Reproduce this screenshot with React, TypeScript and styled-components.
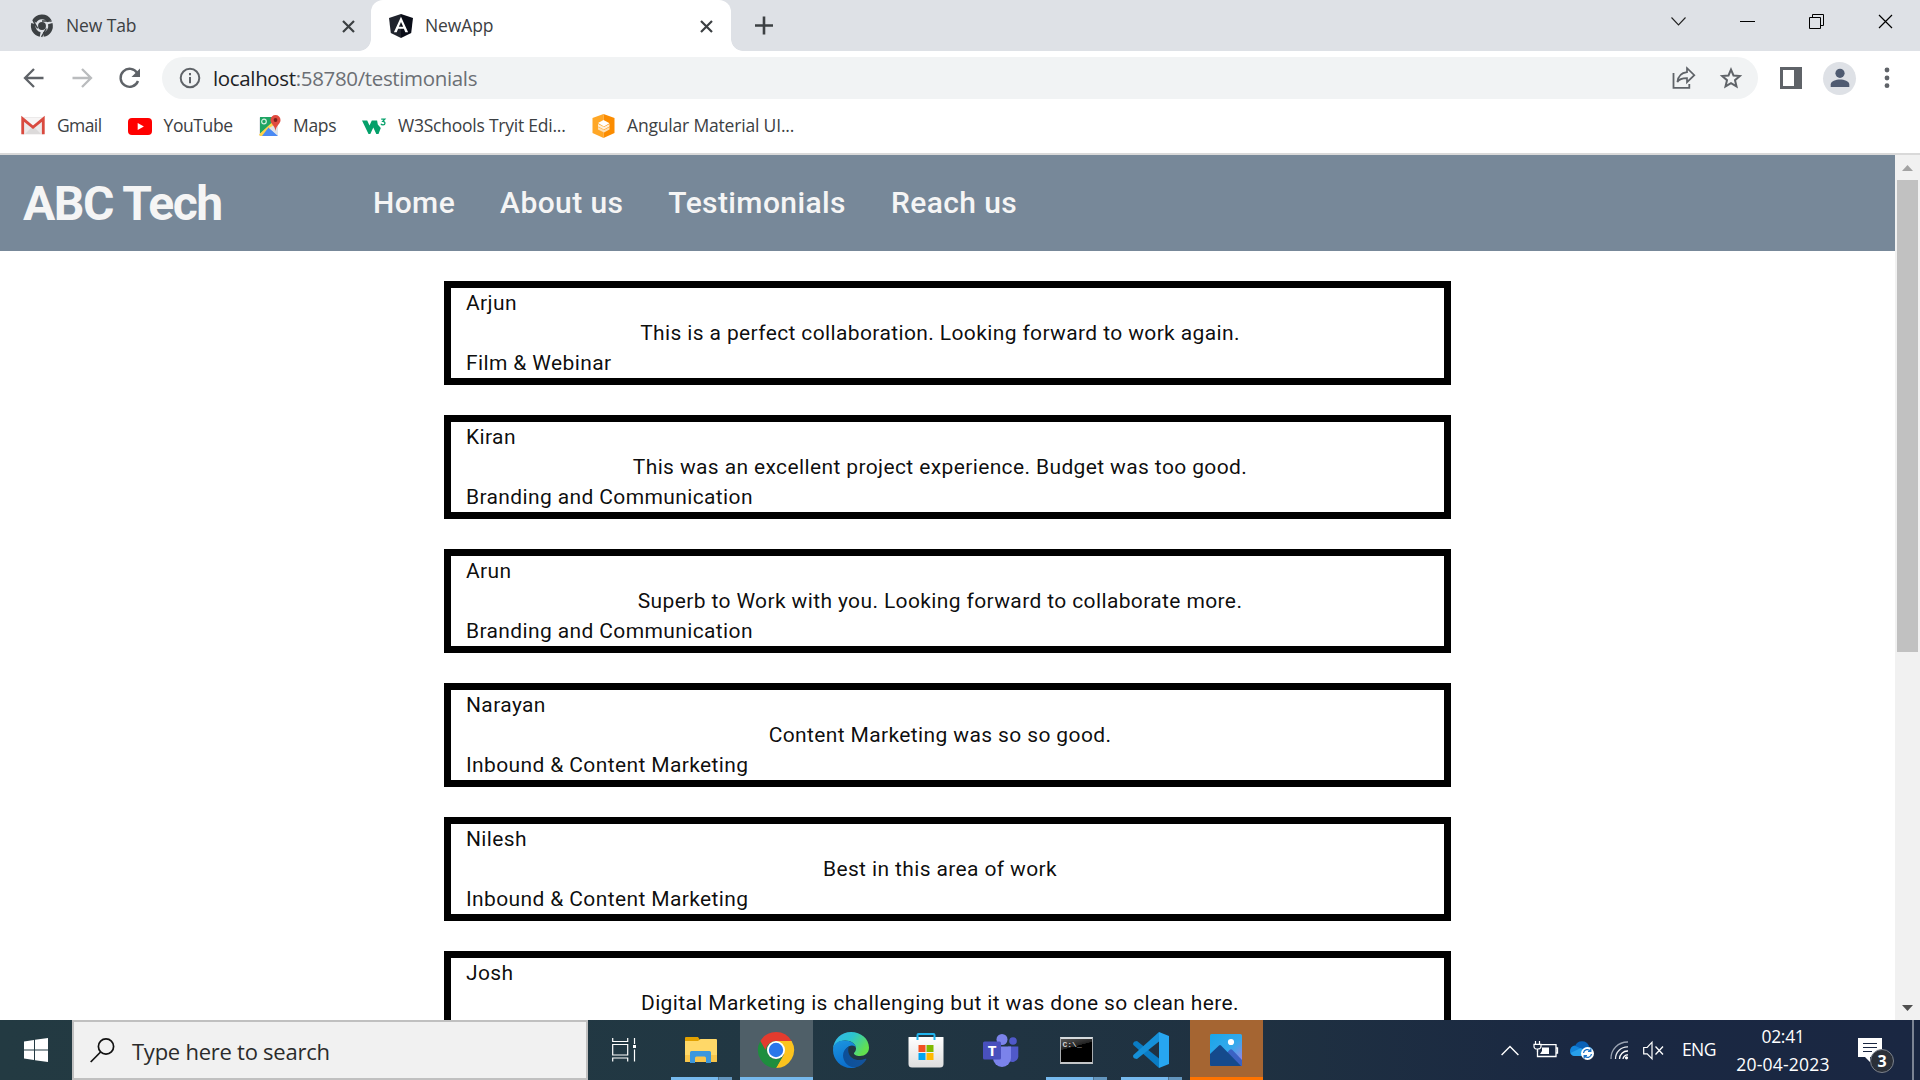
import React from "react";
import styled, { createGlobalStyle } from "styled-components";

const Global = createGlobalStyle`
  *, *::before, *::after { box-sizing: border-box; }
  body { margin: 0; background: #fff; overflow: hidden; }
  svg { display: block; flex: none; overflow: visible; }
`;

const Screen = styled.div`
  width: 1920px;
  height: 1080px;
  display: grid;
  grid-template-rows: 51px 54px 50px 865px 60px;
  overflow: hidden;
  background: #fff;
  font-family: "Open Sans", "Noto Sans", sans-serif;
`;

const Spacer = styled.div<{ $w?: number }>`
  flex: ${(p) => (p.$w === undefined ? "1" : "none")};
  width: ${(p) => (p.$w === undefined ? "auto" : `${p.$w}px`)};
`;

const Label = styled.span<{ $size: number; $track?: number; $color?: string }>`
  font-size: ${(p) => p.$size}px;
  letter-spacing: ${(p) => p.$track ?? 0}px;
  color: ${(p) => p.$color ?? "#3c4043"};
  line-height: 1.36;
  white-space: nowrap;
`;

/* ---------- tab strip ---------- */

const TabStrip = styled.header`
  display: flex;
  background: #dee1e6;
`;

const Tab = styled.div<{ $active?: boolean }>`
  display: flex;
  align-items: center;
  width: ${(p) => (p.$active ? 360 : 371)}px;
  padding: ${(p) => (p.$active ? "1px 18px 0 18px" : "1px 16.5px 0 31px")};
  background: ${(p) => (p.$active ? "#fff" : "transparent")};
  border-radius: 12px 12px 0 0;
`;

const Flare = styled.div<{ $side: "left" | "right" }>`
  align-self: flex-end;
  width: 12px;
  height: 12px;
  margin-left: ${(p) => (p.$side === "left" ? -12 : 0)}px;
  background: radial-gradient(
    circle at ${(p) => (p.$side === "left" ? "0 0" : "100% 0")},
    transparent 11.5px,
    #fff 12.2px
  );
`;

const TabTitle = styled.div<{ $gap: number }>`
  flex: 1;
  padding-left: ${(p) => p.$gap}px;
  display: flex;
`;

const WindowButton = styled.div`
  width: 69px;
  height: 43px;
  display: flex;
  align-items: center;
  justify-content: center;
`;

/* ---------- toolbar ---------- */

const Toolbar = styled.div`
  display: flex;
  align-items: center;
  padding: 0 27px 0 22.5px;
`;

const Omnibox = styled.div`
  width: 1596px;
  height: 42px;
  margin-left: 21px;
  padding: 0 16px 0 16.5px;
  display: flex;
  align-items: center;
  border-radius: 21px;
  background: #f1f3f4;
`;

const Url = styled.div`
  margin-left: 12.5px;
  padding-top: 2px;
  display: flex;
`;

const Avatar = styled.div`
  width: 33px;
  height: 33px;
  margin-left: 21px;
  border-radius: 50%;
  background: #dee1e6;
  display: flex;
  align-items: center;
  justify-content: center;
`;

const Bookmarks = styled.div`
  display: flex;
  padding-left: 21px;
  height: 50px;
  border-bottom: 2px solid #d9d9d9;
`;

const Bookmark = styled.div<{ $w: number; $gap: number }>`
  width: ${(p) => p.$w}px;
  height: 42px;
  display: flex;
  align-items: center;
  gap: ${(p) => p.$gap}px;
`;

/* ---------- web page ---------- */

const Viewport = styled.div`
  display: grid;
  grid-template-columns: 1895px 25px;
  overflow: hidden;
`;

const Page = styled.main`
  overflow: hidden;
  font-family: Roboto, sans-serif;
`;

const Navbar = styled.nav`
  height: 96px;
  display: flex;
  align-items: center;
  padding-left: 23px;
  background: #778899;
  color: #f5f5f5;
`;

const Brand = styled.h1`
  width: 350px;
  margin: 0;
  padding-top: 2px;
  font-size: 48px;
  font-weight: 700;
  letter-spacing: -1.45px;
  line-height: 56px;
  white-space: nowrap;
`;

const NavLinks = styled.div`
  display: flex;
  gap: 45px;
`;

const NavLink = styled.a`
  font-size: 30px;
  font-weight: 500;
  letter-spacing: 0.4px;
  line-height: 48px;
  white-space: nowrap;
`;

const Cards = styled.section`
  display: flex;
  flex-direction: column;
  align-items: center;
  gap: 30px;
  padding-top: 30px;
`;

const Card = styled.article`
  flex: none;
  width: 1007px;
  height: 104px;
  padding: 0 30px 0 15px;
  border: 7px solid #000;
  font-size: 21px;
  line-height: 30px;
  letter-spacing: 0.375px;
  color: rgba(0, 0, 0, 0.95);
`;

const Quote = styled.div`
  text-align: center;
`;

const Scrollbar = styled.div`
  display: flex;
  flex-direction: column;
  align-items: center;
  justify-content: space-between;
  background: #f1f1f1;
`;

const Thumb = styled.div`
  width: 21px;
  height: 472px;
  margin-bottom: auto;
  background: #c1c1c1;
`;

const ScrollArrow = styled.div`
  height: 25px;
  display: flex;
  align-items: center;
`;

/* ---------- taskbar ---------- */

const Taskbar = styled.footer`
  display: flex;
  background: linear-gradient(90deg, #233a42 0%, #213743 40%, #1f3141 65%, #1a2842 82%, #1a2742 100%);
`;

const StartButton = styled.div`
  width: 72px;
  display: flex;
  align-items: center;
  justify-content: center;
`;

const SearchBox = styled.div`
  width: 516px;
  border: 2px solid #c0c0c0;
  background: #f1f1f1;
  display: flex;
  align-items: center;
  padding-left: 16px;
`;

const SearchHint = styled.div`
  display: flex;
  padding: 3px 0 0 17px;
`;

const TaskButton = styled.div<{ $bg?: string; $line?: string }>`
  width: 73px;
  margin-right: 2px;
  display: flex;
  align-items: center;
  justify-content: center;
  background: ${(p) => p.$bg ?? "transparent"};
  border-bottom: 3px solid ${(p) => p.$line ?? "transparent"};
  padding: 3px 1px 0 0;
`;

const OpenApp = styled.div`
  width: 73px;
  margin-right: 2px;
  padding: 3px 6px 0;
  display: grid;
  grid-template-rows: 54px 3px;
`;

const OpenAppIcon = styled.div`
  display: flex;
  align-items: center;
  justify-content: center;
  padding-right: 1px;
`;

const Underline = styled.div`
  width: 61px;
  height: 3px;
  background: linear-gradient(90deg, #76b9ed 0 47px, #4f7390 47px 48px, #6395bd 48px);
`;

const Clock = styled.div`
  width: 96px;
  margin-left: 19px;
  display: flex;
  flex-direction: column;
  align-items: center;
  gap: 4px;
  padding-top: 5px;
`;

const Tray = styled.div`
  display: flex;
  align-items: center;
`;

const ShowDesktop = styled.div`
  width: 8px;
  border-left: 2px solid #7b8494;
`;

/* ---------- icons ---------- */

const Cross = ({ s = 13, w = 2.2, c = "#3c4043" }) => (
  <svg width={s} height={s} viewBox={`0 0 ${s} ${s}`}>
    <path d={`M1 1L${s - 1} ${s - 1}M${s - 1} 1L1 ${s - 1}`} stroke={c} strokeWidth={w} />
  </svg>
);

const GreyChrome = () => (
  <svg width="22" height="22" viewBox="0 0 24 24">
    <g fill="none" stroke="#3c4043" strokeWidth="5">
      <path d="M3.500 7.200A9.500 9.500 0 0 1 20 6.500" />
      <path d="M2.700 9.500A9.500 9.500 0 0 0 10 21.300" />
      <path d="M21 9.500A9.500 9.500 0 0 1 13.500 21.400" />
    </g>
    <path d="M12 6.500h10.500M7.200 14.500L2.500 6.500M16.700 14.700L11.500 23.800" stroke="#3c4043" strokeWidth="1.500" />
    <circle cx="12" cy="12" r="4.300" fill="#3c4043" />
  </svg>
);

const AngularIcon = () => (
  <svg width="24" height="24" viewBox="0 0 24 24">
    <path fill="#20242d" d="M12 0L0 4.1l1.8 15L12 24z" />
    <path fill="#0a0d18" d="M12 0l12 4.1-1.8 15L12 24z" />
    <path fill="#fff" fillRule="evenodd" d="M12 2.7L4.9 18.3h2.8l1.4-3.5h5.8l1.4 3.5h2.8zm0 5.4l2.2 4.6H9.8z" />
  </svg>
);

const Back = ({ flip = false }) => (
  <svg width="21" height="20" viewBox="0 0 21 20" transform={flip ? "scale(-1 1)" : undefined}>
    <path d="M20.5 10H2.5M11 1L2 10l9 9" fill="none" stroke={flip ? "#babcbe" : "#5f6368"} strokeWidth="2.3" />
  </svg>
);

const Reload = () => (
  <svg width="22" height="21" viewBox="0 0 22 21">
    <path d="M18.3 5.2A9 9 0 1 0 19 13" fill="none" stroke="#5f6368" strokeWidth="2.4" />
    <path d="M21 .5V9h-8.5z" fill="#5f6368" />
  </svg>
);

const Info = () => (
  <svg width="22" height="22" viewBox="0 0 22 22">
    <circle cx="11" cy="11" r="9.3" fill="none" stroke="#5f6368" strokeWidth="2" />
    <path d="M10 6h2v2.2h-2zM10 10h2v6.2h-2z" fill="#5f6368" />
  </svg>
);

const Share = () => (
  <svg width="24" height="22" viewBox="0 0 24 22">
    <path d="M1.5 6v14.8h15.8V17" fill="none" stroke="#5f6368" strokeWidth="1.8" />
    <path d="M15 1.2l7.3 7-7.3 7v-4c-5 0-8 1-9.6 4C6 9.500 9 5.800 15 5.200z" fill="none" stroke="#5f6368" strokeWidth="1.7" />
  </svg>
);

const Star = () => (
  <svg width="22" height="22" viewBox="0 0 22 22">
    <path d="M11 2.600l2.500 5.900 6.300.5-4.800 4.200 1.500 6.200L11 16.100l-5.500 3.300L7 13.200 2.200 9l6.300-.5z" fill="none" stroke="#5f6368" strokeWidth="2" />
  </svg>
);

const SidePanel = () => (
  <svg width="22" height="22" viewBox="0 0 22 22">
    <path fill="#5f6368" fillRule="evenodd" d="M0 0h22v22H0zM3 3v16h11V3z" />
  </svg>
);

const Person = () => (
  <svg width="20" height="20" viewBox="0 0 20 20">
    <circle cx="10" cy="5.300" r="4.600" fill="#4f5b71" />
    <path d="M.7 19v-2.500C.7 13 6 11.500 10 11.500s9.300 1.500 9.300 5V19z" fill="#4f5b71" />
  </svg>
);

const Dots = () => (
  <svg width="6" height="22" viewBox="0 0 6 22">
    {[3, 11, 18.7].map((y) => (
      <circle key={y} cx="3" cy={y} r="2.400" fill="#5f6368" />
    ))}
  </svg>
);

const Gmail = () => (
  <svg width="24" height="18" viewBox="0 0 24 18">
    <rect x="1" y="0" width="22" height="17.500" rx="1.500" fill="#eceaea" />
    <path d="M4 17L12 9l8 8z" fill="#dcdada" />
    <path d="M3 1l9 7.500L21 1z" fill="#f7f5f5" />
    <path d="M1.700 17.200V1.800L12 10.300 22.300 1.800v15.400" fill="none" stroke="#d94a3f" strokeWidth="2.800" />
  </svg>
);

const YouTube = () => (
  <svg width="24" height="17" viewBox="0 0 24 17">
    <rect width="24" height="17" rx="4" fill="#f00" />
    <path d="M9.700 5v7l6.200-3.500z" fill="#fff" />
  </svg>
);

const Maps = () => (
  <svg width="23" height="22" viewBox="0 0 23 22">
    <rect x="0" y="2" width="19" height="19" rx="1.500" fill="#e8eaed" />
    <path d="M1 2h13v5L1 19z" fill="#1fa463" />
    <path d="M0 19.500L14 6.500l2.500 2.800L3.500 21H1z" fill="#ffd24a" />
    <path d="M9.500 12.500L19 21H3z" fill="#4a89f3" />
    <path d="M10 13l7-4 2 3v8z" fill="#dfe3e8" />
    <circle cx="5" cy="6.500" r="2.300" fill="none" stroke="#d5f0e0" strokeWidth="1.200" />
    <path d="M16.500 0a5 5 0 0 1 5 5c0 4-4.200 5-5 11-.8-6-5-7-5-11a5 5 0 0 1 5-5z" fill="#e04a3f" />
    <circle cx="16.500" cy="5" r="1.900" fill="#7a201b" />
  </svg>
);

const W3 = () => (
  <svg width="24" height="17" viewBox="0 0 24 17">
    <path d="M0 2.500h5.200l2.300 5 2.300-5h5.300l.7 4 3 3.500-2.300 6h-2.200l-3-6.500-3 6.500H6.500z" fill="#04a06a" />
    <path d="M19.200 1.200h3.600l-2 2.200c3 0 2.600 3.500.3 3.500-1.200 0-1.900-.5-2.200-1.200" fill="none" stroke="#04a06a" strokeWidth="1.300" />
  </svg>
);

const MaterialUi = () => (
  <svg width="24" height="24" viewBox="0 0 24 24">
    <path d="M11.500 0L.5 4v15l11 5z" fill="#ffa726" />
    <path d="M11.500 0l11 4v15l-11 5z" fill="#fb8c00" />
    <path d="M6 13l6 3 5.500-3v2.500l-5.500 3-6-3z" fill="#ffe0b2" />
    <path d="M6 10l6 3 5.500-3v2.500l-5.500 3-6-3z" fill="#fff0da" />
    <path d="M6 9l5.500-3 6 3.200-5.500 3.300z" fill="#fff" />
  </svg>
);

const WindowsLogo = () => (
  <svg width="24" height="24" viewBox="0 0 24 24">
    <path d="M0 3.400L10 2v9.500H0zM11 1.800L24 0v11.500H11zM0 12.500h10V22L0 20.600zM11 12.500h13V24l-13-1.800z" fill="#fff" />
  </svg>
);

const SearchIcon = () => (
  <svg width="25" height="25" viewBox="0 0 25 25">
    <circle cx="16" cy="8.500" r="7.600" fill="none" stroke="#111" strokeWidth="1.700" />
    <path d="M10.600 14L.7 24" stroke="#111" strokeWidth="1.700" />
  </svg>
);

const TaskView = () => (
  <svg width="25" height="24" viewBox="0 0 25 24">
    <path d="M.7 0v3.500h15V0M.7 6.500h15v10.500H.7zM.7 23.500V20h15v3.500M22.500 0v6M22.500 11.500V23.500" fill="none" stroke="#fff" strokeWidth="1.200" />
    <rect x="21" y="7" width="3" height="3" fill="#fff" />
  </svg>
);

const Explorer = () => (
  <svg width="32" height="28" viewBox="0 0 32 28">
    <path d="M0 1.500Q0 1 1 1h12l2 3-1 3H0z" fill="#e2a100" />
    <path d="M0 5h13l2.500-2H31q1 0 1 1v21q0 1-1 1H1q-1 0-1-1z" fill="#ffd868" />
    <path d="M0 19h32v6q0 1-1 1H1q-1 0-1-1z" fill="#f9c64a" />
    <path d="M5 27V16.500Q5 15 6.500 15h18q1.500 0 1.500 1.500V27h-5v-5q0-1.500-1.500-1.500h-8Q10 20.500 10 22v5z" fill="#3b97dd" />
  </svg>
);

const Chrome = () => (
  <svg width="36" height="36" viewBox="0 0 36 36">
    <path d="M2.400 9A18 18 0 0 1 33.600 9H18z" fill="#e33b2e" />
    <path d="M18 9h15.600A18 18 0 0 1 18 36l7.800-13.500z" fill="#fcc31e" />
    <path d="M2.400 9A18 18 0 0 0 18 36l7.800-13.500A9 9 0 0 1 10.200 22.500z" fill="#1e8e3e" />
    <path d="M2.400 9l7.800 13.500L18 9z" fill="#1e8e3e" />
    <path d="M2.400 9l5 8.700A11 11 0 0 1 18 9z" fill="#e33b2e" />
    <circle cx="18" cy="18" r="9" fill="#fff" />
    <circle cx="18" cy="18" r="7.200" fill="#2a76ea" />
  </svg>
);

const Edge = () => (
  <svg width="36" height="36" viewBox="0 0 36 36">
    <defs>
      <linearGradient id="edgeTop" x1="0" y1="0" x2="1" y2=".5">
        <stop offset="0" stopColor="#35b5ee" />
        <stop offset=".5" stopColor="#2cc4cf" />
        <stop offset="1" stopColor="#62e04f" />
      </linearGradient>
      <linearGradient id="edgeLeft" x1="0" y1="0" x2=".3" y2="1">
        <stop offset="0" stopColor="#1c96e0" />
        <stop offset="1" stopColor="#0b6fcd" />
      </linearGradient>
      <linearGradient id="edgeDark" x1="0" y1="0" x2="1" y2="0">
        <stop offset="0" stopColor="#0c4f99" />
        <stop offset="1" stopColor="#14549c" />
      </linearGradient>
    </defs>
    <path d="M0 17C.6 7 8.500 0 18 0c10 0 18 7 18 15.500 0 5.500-4 8.500-9 8.500-4 0-6.500-1.500-6-3 1.300-1.200 2-2.700 2-4.500C23 12 18 8.500 12 8.500 6 8.500 1.500 12 0 17z" fill="url(#edgeTop)" />
    <path d="M0 18C0 12 5 8.500 11 8.500c7 0 12 3.500 12 8 0-2-2-3-4-3-4 0-7.500 4-7.500 9 0 7 5 12.500 11.500 12.700C21.500 36 20 36 18 36 8 36 0 28 0 18z" fill="url(#edgeLeft)" />
    <path d="M16 14.200c-4 2.300-6 5.300-6 9.300C10 30 16 35.800 22 35.600c5-1 9-4 11.300-8 .3-.8-.3-1.200-1-.8C25 30 17 27 15.500 20.500c-.5-2.500-.3-4.800.5-6.300z" fill="url(#edgeDark)" />
  </svg>
);

const Store = () => (
  <svg width="36" height="36" viewBox="0 0 36 36">
    <defs>
      <linearGradient id="bag" x1="0" y1="0" x2="0" y2="1">
        <stop offset="0" stopColor="#fff" />
        <stop offset="1" stopColor="#dedede" />
      </linearGradient>
    </defs>
    <path d="M.5 5.500Q.5 5 1 5h34q.5 0 .5.500V32q0 3.500-3.500 3.500H4Q.5 35.500.5 32z" fill="url(#bag)" />
    <path d="M9.500 8V3Q9.500 2 10.500 2h15q1 0 1 1v5" fill="none" stroke="#1fb4ee" strokeWidth="2" />
    <path d="M10.500 13h7v7h-7z" fill="#f25022" />
    <path d="M18.500 13h7v7h-7z" fill="#7fba00" />
    <path d="M10.500 21h7v7h-7z" fill="#00a4ef" />
    <path d="M18.500 21h7v7h-7z" fill="#ffb900" />
  </svg>
);

const TeamsBox = styled.div`
  position: relative;
  width: 36px;
  height: 33px;
`;

const TeamsLetter = styled.span`
  position: absolute;
  left: 0;
  top: 7px;
  width: 18px;
  text-align: center;
  font: 700 15px/18px "Open Sans", sans-serif;
  color: #fff;
`;

const Teams = () => (
  <TeamsBox>
    <svg width="36" height="33" viewBox="0 0 36 33">
      <circle cx="30" cy="7" r="3.800" fill="#5059c9" />
      <path d="M25 12.500h10.300V23a6 6 0 0 1-10.300 3z" fill="#5059c9" />
      <circle cx="19" cy="5.500" r="5.500" fill="#7b83eb" />
      <path d="M10 12.500h18V24a9 9 0 0 1-18 0z" fill="#7b83eb" />
      <rect x="0" y="7.500" width="18" height="18" rx="1.500" fill="#4950bd" />
    </svg>
    <TeamsLetter>T</TeamsLetter>
  </TeamsBox>
);

const ConsoleFrame = styled.div`
  width: 33px;
  height: 27px;
  border: 1px solid #a9adb0;
  border-top: 2px solid #d5dadd;
  border-bottom: 2px solid #c3c6c8;
  background: linear-gradient(165deg, #555 0, #222 35%, #000 36%);
  color: #d0d0d0;
  font: 700 8px/10px "Liberation Mono", monospace;
  padding: 1px 0 0 2px;
  white-space: nowrap;
`;

const VsCode = () => (
  <svg width="36" height="36" viewBox="0 0 36 36">
    <path d="M1.500 9.500L4 9l22 17.500V36L.4 13q-.8-1.300 0-2.300z" fill="#0a7cc4" />
    <path d="M1.500 26.500L4 27 26 9.500V0L.4 23q-.8 1.300 0 2.300z" fill="#1590d8" />
    <path d="M26 0v36l10-4V4z" fill="#27a6f0" />
  </svg>
);

const Photos = () => (
  <svg width="32" height="32" viewBox="0 0 32 32">
    <defs>
      <linearGradient id="sky" x1="0" y1="0" x2="1" y2="1">
        <stop offset="0" stopColor="#1aa6e8" />
        <stop offset=".55" stopColor="#35a9ec" />
        <stop offset="1" stopColor="#b07be0" />
      </linearGradient>
    </defs>
    <rect width="32" height="32" rx="1.500" fill="url(#sky)" />
    <circle cx="21" cy="8" r="3.100" fill="#fff" />
    <path d="M14 22l5.500-6q1.500-1.500 3 0L32 26v6H14z" fill="#3b62c4" />
    <path d="M0 20L9 11.500q1-1 2 0L31 32H1q-1 0-1-1z" fill="#154a8c" />
  </svg>
);

const ChevronUp = () => (
  <svg width="18" height="11" viewBox="0 0 18 11">
    <path d="M.6 10L9 1.500 17.400 10" fill="none" stroke="#fff" strokeWidth="1.400" />
  </svg>
);

const Battery = () => (
  <svg width="24" height="18" viewBox="0 0 24 18">
    <path d="M6.500 3.700H22v11.800H3.500V9M22 7h1.500v5H22" fill="none" stroke="#fff" strokeWidth="1.300" />
    <path d="M1.500 0v3M5.500 0v3M0 3.300h7v2.200Q7 8 3.500 8T0 5.500zM3.500 8v3" fill="none" stroke="#fff" strokeWidth="1.200" />
    <path d="M8 6.500h7v6.500H6l2-3z" fill="#fff" />
  </svg>
);

const OneDrive = () => (
  <svg width="25" height="20" viewBox="0 0 25 20">
    <path d="M5 6A7.500 7.500 0 0 1 19 6l-7 6z" fill="#0a62b8" />
    <path d="M4.500 5.500C1.500 6 0 8.500 0 11c0 3 2 5 5 5h14q4-.5 4-4.500 0-4-4.500-5L12 9z" fill="#1384da" />
    <path d="M.5 13L11 8l8 8H5q-3 0-4.500-3z" fill="#28a0ea" />
    <circle cx="17.500" cy="13.500" r="6.500" fill="#fff" />
    <path d="M13.500 13a4 4 0 0 1 7-2M21.500 14a4 4 0 0 1-7 2M20.800 8.500V11.300H18M14.200 18.500V15.700H17" fill="none" stroke="#1a73c8" strokeWidth="1.300" />
  </svg>
);

const Wifi = () => (
  <svg width="19" height="19" viewBox="0 0 19 19">
    <g fill="none" strokeWidth="1.300">
      <path d="M1 18A16.500 16.500 0 0 1 18 1" stroke="#9aa3b2" />
      <path d="M5.500 18A12 12 0 0 1 18 5.800" stroke="#e4e7ec" />
      <path d="M9.500 18A8 8 0 0 1 18 10" stroke="#fff" />
      <path d="M13 18a4.500 4.500 0 0 1 5-4" stroke="#fff" />
    </g>
    <circle cx="16.500" cy="16.800" r="1.600" fill="#fff" />
  </svg>
);

const Muted = () => (
  <svg width="21" height="19" viewBox="0 0 21 19">
    <path d="M.7 6.500h3.500L9 1.200v16.600l-4.800-5H.7z" fill="none" stroke="#fff" strokeWidth="1.200" />
    <path d="M12.500 5.500l7.500 8M20 5.500l-7.500 8" stroke="#fff" strokeWidth="1.300" />
  </svg>
);

const NoticeBox = styled.div`
  position: relative;
  width: 24px;
  height: 24px;
`;

const Badge = styled.span`
  position: absolute;
  left: 12px;
  top: 11px;
  width: 24px;
  height: 24px;
  border: 1px solid #7c828c;
  border-radius: 50%;
  background: #2b3038;
  color: #fff;
  text-align: center;
  font: 700 16px/22px "Open Sans", sans-serif;
`;

const Notice = () => (
  <NoticeBox>
    <svg width="24" height="24" viewBox="0 0 24 24">
      <path d="M0 0h24v19H12v5l-5-5H0z" fill="#fff" />
      <path d="M5 5.500h14M5 9.500h14M5 13.500h9" stroke="#1a2742" strokeWidth="1.200" />
    </svg>
    <Badge>3</Badge>
  </NoticeBox>
);

/* ---------- data ---------- */

const bookmarks = [
  { icon: <Gmail />, text: "Gmail", w: 107, gap: 12, track: -0.6 },
  { icon: <YouTube />, text: "YouTube", w: 131, gap: 11.5, track: -0.4 },
  { icon: <Maps />, text: "Maps", w: 103, gap: 11, track: -0.3 },
  { icon: <W3 />, text: "W3Schools Tryit Edi...", w: 230, gap: 12, track: -0.23 },
  { icon: <MaterialUi />, text: "Angular Material UI...", w: 240, gap: 11, track: -0.18 },
];

const testimonials = [
  { name: "Arjun", quote: "This is a perfect collaboration. Looking forward to work again.", service: "Film & Webinar" },
  { name: "Kiran", quote: "This was an excellent project experience. Budget was too good.", service: "Branding and Communication" },
  { name: "Arun", quote: "Superb to Work with you. Looking forward to collaborate more.", service: "Branding and Communication" },
  { name: "Narayan", quote: "Content Marketing was so so good.", service: "Inbound & Content Marketing" },
  { name: "Nilesh", quote: "Best in this area of work", service: "Inbound & Content Marketing" },
  { name: "Josh", quote: "Digital Marketing is challenging but it was done so clean here." },
];

export default function App() {
  return (
    <Screen>
      <Global />
      <TabStrip>
        <Tab>
          <GreyChrome />
          <TabTitle $gap={13}><Label $size={17.5} $track={-0.1}>New Tab</Label></TabTitle>
          <Cross />
        </Tab>
        <Flare $side="left" />
        <Tab $active>
          <AngularIcon />
          <TabTitle $gap={12}><Label $size={17.5} $track={-0.1}>NewApp</Label></TabTitle>
          <Cross />
        </Tab>
        <Flare $side="right" />
        <Spacer $w={11.5} />
        <svg width="18" height="51" viewBox="0 0 18 51">
          <path d="M9 16.500v18M0 25.500h18" stroke="#3c4043" strokeWidth="2.600" />
        </svg>
        <Spacer />
        <WindowButton>
          <svg width="15" height="9" viewBox="0 0 15 9"><path d="M.5.500l7 7.500 7-7.500" fill="none" stroke="#222" strokeWidth="1.100" /></svg>
        </WindowButton>
        <WindowButton>
          <svg width="15" height="1" viewBox="0 0 15 1"><path d="M0 .5h15" stroke="#000" /></svg>
        </WindowButton>
        <WindowButton>
          <svg width="15" height="15" viewBox="0 0 15 15"><path d="M.5 3.500h11v11H.500zM3.500 3.500v-3h11v11h-3" fill="none" stroke="#000" /></svg>
        </WindowButton>
        <WindowButton><Cross s={15} w={1.2} c="#000" /></WindowButton>
      </TabStrip>

      <Toolbar>
        <Back />
        <Spacer $w={28} />
        <Back flip />
        <Spacer $w={26.5} />
        <Reload />
        <Omnibox>
          <Info />
          <Url>
            <Label $size={20.5} $track={-0.35} $color="#202124">localhost</Label>
            <Label $size={20.5} $track={-0.35} $color="#6b6f74">:58780/testimonials</Label>
          </Url>
          <Spacer />
          <Share />
          <Spacer $w={24} />
          <Star />
        </Omnibox>
        <Spacer $w={22} />
        <SidePanel />
        <Avatar><Person /></Avatar>
        <Spacer $w={28} />
        <Dots />
      </Toolbar>

      <Bookmarks>
        {bookmarks.map((b) => (
          <Bookmark key={b.text} $w={b.w} $gap={b.gap}>
            {b.icon}
            <Label $size={17.5} $track={b.track}>{b.text}</Label>
          </Bookmark>
        ))}
      </Bookmarks>

      <Viewport>
        <Page>
          <Navbar>
            <Brand>ABC Tech</Brand>
            <NavLinks>
              <NavLink>Home</NavLink>
              <NavLink>About us</NavLink>
              <NavLink>Testimonials</NavLink>
              <NavLink>Reach us</NavLink>
            </NavLinks>
          </Navbar>
          <Cards>
            {testimonials.map((t) => (
              <Card key={t.name}>
                <div>{t.name}</div>
                <Quote>{t.quote}</Quote>
                {t.service && <div>{t.service}</div>}
              </Card>
            ))}
          </Cards>
        </Page>
        <Scrollbar>
          <ScrollArrow>
            <svg width="11" height="6" viewBox="0 0 11 6"><path d="M0 6L5.500 0 11 6z" fill="#a3a3a3" /></svg>
          </ScrollArrow>
          <Thumb />
          <ScrollArrow>
            <svg width="11" height="6" viewBox="0 0 11 6"><path d="M0 0l5.500 6L11 0z" fill="#505050" /></svg>
          </ScrollArrow>
        </Scrollbar>
      </Viewport>

      <Taskbar>
        <StartButton><WindowsLogo /></StartButton>
        <SearchBox>
          <SearchIcon />
          <SearchHint>
            <Label $size={22} $track={-0.25} $color="#2b2b2b">Type here to search</Label>
          </SearchHint>
        </SearchBox>
        <TaskButton><TaskView /></TaskButton>
        <Spacer $w={2} />
        <OpenApp><OpenAppIcon><Explorer /></OpenAppIcon><Underline /></OpenApp>
        <TaskButton $bg="#4f5f68" $line="#76b9ed"><Chrome /></TaskButton>
        <TaskButton><Edge /></TaskButton>
        <TaskButton><Store /></TaskButton>
        <TaskButton><Teams /></TaskButton>
        <OpenApp><OpenAppIcon><ConsoleFrame>C:\_</ConsoleFrame></OpenAppIcon><Underline /></OpenApp>
        <OpenApp><OpenAppIcon><VsCode /></OpenAppIcon><Underline /></OpenApp>
        <TaskButton $bg="#a56532" $line="#ff7300"><Photos /></TaskButton>
        <Spacer />
        <Tray>
          <ChevronUp />
          <Spacer $w={15} />
          <Battery />
          <Spacer $w={12} />
          <OneDrive />
          <Spacer $w={15} />
          <Wifi />
          <Spacer $w={14} />
          <Muted />
          <Spacer $w={18} />
          <Label $size={17.5} $track={-0.5} $color="#fff">ENG</Label>
        </Tray>
        <Clock>
          <Label $size={17.5} $track={-0.3} $color="#fff">02:41</Label>
          <Label $size={17.5} $track={0.2} $color="#fff">20-04-2023</Label>
        </Clock>
        <Spacer $w={27} />
        <Tray><Notice /></Tray>
        <Spacer $w={30} />
        <ShowDesktop />
      </Taskbar>
    </Screen>
  );
}
